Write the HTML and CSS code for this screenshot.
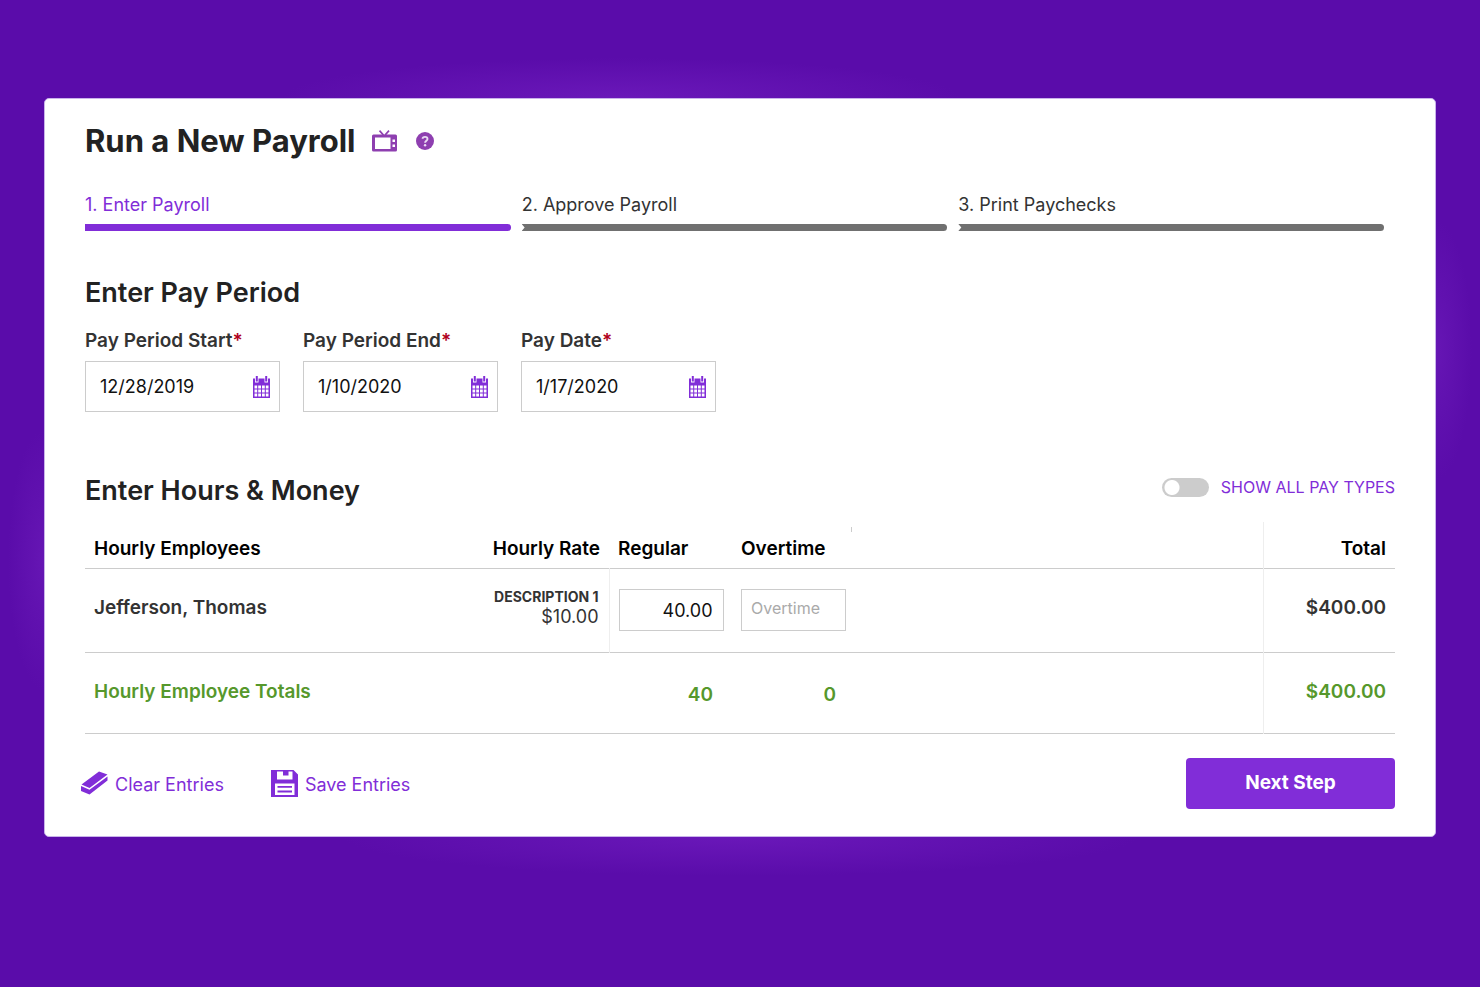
FILE: index.html
```html
<!DOCTYPE html>
<html lang="en">
<head>
  <meta charset="UTF-8" />
  <meta name="viewport" content="width=device-width, initial-scale=1" />
  <title>Run a New Payroll</title>
  <link rel="stylesheet" href="styles.css">
</head>
<body>

  <!-- Shared calendar icon -->
  <svg class="sprite" width="0" height="0" aria-hidden="true">
    <symbol id="icon-calendar" viewBox="0 0 17 22">
      <path fill-rule="evenodd" d="M0 2.500h2v4h3.500v-4h6v4H15v-4h2V22H0zM1.500 9.500v11h14v-11z"/>
      <path d="M2.800 0h2v5.500h-2zM12.200 0h2v5.500h-2z"/>
      <path d="M4.200 9h1v12h-1zM8 9h1v12H8zM11.800 9h1v12h-1zM1 12.500h15v1H1zM1 16.500h15v1H1z"/>
    </symbol>
  </svg>

  <main class="card">

    <header class="page-title">
      <h1>Run a New Payroll</h1>
      <a href="#video" class="title-icon" aria-label="Watch video">
        <svg width="25" height="22" viewBox="0 0 25 22">
          <path d="M7.500 .6l4 4.500M17 .6l-4 4.500" fill="none" stroke="currentColor" stroke-width="1.600"/>
          <path fill="currentColor" fill-rule="evenodd" d="M1.500 4.500h22A1.500 1.500 0 0 1 25 6v14a1.500 1.500 0 0 1-1.500 1.500h-22A1.500 1.500 0 0 1 0 20V6A1.500 1.500 0 0 1 1.500 4.500zM3 7.500v11.500h15.500V7.500zM20.500 9.500v2.500H23V9.500zM20.500 14.500v2.500H23v-2.500z"/>
        </svg>
      </a>
      <a href="#help" class="title-icon" aria-label="Help">
        <svg width="18" height="18" viewBox="0 0 18 18">
          <circle cx="9" cy="9" r="9" fill="currentColor"/>
          <path d="M6.600 6.800C6.700 4.200 11.500 4.200 11.500 6.900 11.500 8.700 9.100 8.700 9.100 10.700" fill="none" stroke="#eadcf2" stroke-width="1.900"/>
          <circle cx="9.100" cy="13.300" r="1.200" fill="#eadcf2"/>
        </svg>
      </a>
    </header>

    <ol class="steps">
      <li class="step active">1. Enter Payroll</li>
      <li class="step">2. Approve Payroll</li>
      <li class="step">3. Print Paychecks</li>
    </ol>

    <form>
      <section class="period">
        <h2>Enter Pay Period</h2>
        <div class="fields">
          <div class="field">
            <label for="start">Pay Period Start<span class="required">*</span></label>
            <div class="date-box">
              <input type="text" id="start" value="12/28/2019">
              <button type="button" aria-label="Choose start date"><svg width="17" height="22"><use href="#icon-calendar"/></svg></button>
            </div>
          </div>
          <div class="field">
            <label for="end">Pay Period End<span class="required">*</span></label>
            <div class="date-box">
              <input type="text" id="end" value="1/10/2020">
              <button type="button" aria-label="Choose end date"><svg width="17" height="22"><use href="#icon-calendar"/></svg></button>
            </div>
          </div>
          <div class="field">
            <label for="paydate">Pay Date<span class="required">*</span></label>
            <div class="date-box">
              <input type="text" id="paydate" value="1/17/2020">
              <button type="button" aria-label="Choose pay date"><svg width="17" height="22"><use href="#icon-calendar"/></svg></button>
            </div>
          </div>
        </div>
      </section>

      <section class="hours">
        <div class="hours-head">
          <h2>Enter Hours &amp; Money</h2>
          <label class="toggle">
            <input type="checkbox">
            <span>SHOW ALL PAY TYPES</span>
          </label>
        </div>

        <table class="payroll">
          <colgroup>
            <col class="col-name">
            <col class="col-rate">
            <col class="col-regular">
            <col class="col-overtime">
            <col>
            <col class="col-total">
          </colgroup>
          <thead>
            <tr>
              <th>Hourly Employees</th>
              <th class="right">Hourly Rate</th>
              <th>Regular</th>
              <th>Overtime</th>
              <th class="spacer"></th>
              <th class="total">Total</th>
            </tr>
          </thead>
          <tbody>
            <tr>
              <td class="name">Jefferson, Thomas</td>
              <td class="rate"><small>DESCRIPTION 1</small>$10.00</td>
              <td><input type="text" value="40.00" aria-label="Regular hours"></td>
              <td><input type="text" placeholder="Overtime" aria-label="Overtime hours"></td>
              <td></td>
              <td class="total">$400.00</td>
            </tr>
          </tbody>
          <tfoot>
            <tr>
              <td colspan="2">Hourly Employee Totals</td>
              <td class="sum">40</td>
              <td class="sum">0</td>
              <td></td>
              <td class="total">$400.00</td>
            </tr>
          </tfoot>
        </table>
      </section>

      <div class="actions">
        <button type="reset" class="link-button">
          <svg width="27" height="24" viewBox="0 0 27 24">
            <path d="M18 .5l8.500 3L8.500 17 .5 13.500zM0 15l8.500 3.800L26.500 5.500V9.500L8.500 23.500 0 20z" fill="currentColor"/>
          </svg>
          <span>Clear Entries</span>
        </button>
        <button type="button" class="link-button">
          <svg width="27" height="27" viewBox="0 0 27 27">
            <path fill="currentColor" fill-rule="evenodd" d="M0 0h22.500L27 4.500V27H0zM6 1.500v8h15.500v-8h-4V5.500h-5.500v-4zM4 13.500V25h19.500V13.500z"/>
            <path d="M6.500 16.800h14.500M6.500 21.500h14.500" stroke="currentColor" stroke-width="1.800"/>
          </svg>
          <span>Save Entries</span>
        </button>
        <button type="submit" class="next">Next Step</button>
      </div>
    </form>

  </main>

</body>
</html>
```
FILE: styles.css
```css
* {
  box-sizing: border-box;
}

body {
  margin: 0;
  min-height: 100vh;
  padding: 98px 44px;
  font-family: Inter, "Liberation Sans", sans-serif;
  font-size: 18px;
  line-height: 24px;
  color: #333;
  background-color: #5a0caa;
  background-image:
    radial-gradient(ellipse 340px 40px at 42% 98px, #6a18b9, transparent),
    radial-gradient(ellipse 400px 40px at 50% 836px, #6a18b9, transparent),
    radial-gradient(ellipse 36px 130px at 44px 560px, #6616b4, transparent),
    radial-gradient(ellipse 36px 130px at calc(100% - 44px) 350px, #6616b4, transparent);
  background-repeat: no-repeat;
}

h1, h2 {
  margin: 0;
  color: #222;
}

h1 {
  font-size: 31px;
  line-height: 40px;
  font-weight: 700;
}

h2 {
  font-size: 27px;
  line-height: 32px;
  font-weight: 600;
}

button, input {
  font: inherit;
}

button {
  border: 0;
  padding: 0;
  background: none;
  color: #812dd8;
  cursor: pointer;
}

svg {
  display: block;
}

.sprite {
  position: absolute;
}

.card {
  padding: 22px 40px 27px;
  background-color: #fff;
  border: 1px solid #c9b3ea;
  border-radius: 5px;
}

.page-title {
  display: flex;
  align-items: center;
}

.title-icon {
  margin-left: 16px;
  color: #8e3fb0;
}

.title-icon + .title-icon {
  margin-left: 19px;
}

/* Steps */
.steps {
  display: grid;
  grid-template-columns: repeat(3, 1fr);
  gap: 11px;
  list-style: none;
  margin: 32px 11px 0 0;
  padding: 0;
}

.step::after {
  content: "";
  display: block;
  height: 7px;
  margin-top: 7px;
  background-color: #707070;
  border-radius: 0 4px 4px 0;
  clip-path: polygon(0 0, 100% 0, 100% 100%, 0 100%, 3px 50%);
}

.step.active {
  color: #812dd8;
}

.step.active::after {
  background-color: #812dd8;
  clip-path: none;
}

/* Pay period */
.period {
  margin-top: 46px;
}

.fields {
  display: flex;
  gap: 23px;
  margin-top: 20px;
}

.field {
  width: 195px;
}

.field label {
  display: block;
  font-size: 19px;
  font-weight: 600;
  white-space: nowrap;
}

.required {
  color: #b00020;
}

.date-box {
  display: flex;
  align-items: center;
  height: 51px;
  margin-top: 8px;
  padding: 0 9px 0 14px;
  border: 1px solid #ccc;
}

.date-box input {
  flex: 1;
  min-width: 0;
  padding: 0;
  border: 0;
  outline: 0;
  color: #111;
}

.date-box svg {
  fill: #812dd8;
}

/* Hours */
.hours {
  margin-top: 63px;
}

.hours-head {
  display: flex;
  justify-content: space-between;
  align-items: flex-start;
}

.toggle {
  display: flex;
  align-items: center;
  gap: 12px;
  font-size: 16px;
  color: #812dd8;
  cursor: pointer;
}

.toggle input {
  appearance: none;
  width: 47px;
  height: 19px;
  margin: 0;
  border-radius: 10px;
  background: radial-gradient(circle at 10px 50%, #fff 7px, #ccc 8px);
}

.toggle input:checked {
  background: radial-gradient(circle at 37px 50%, #fff 7px, #812dd8 8px);
}

.payroll {
  width: 100%;
  margin-top: 15px;
  border-collapse: collapse;
  table-layout: fixed;
  font-size: 19px;
}

.col-name {
  width: 30%;
}

.col-rate {
  width: 10%;
}

.col-regular {
  width: 123px;
}

.col-overtime {
  width: 119px;
}

.col-total {
  width: 132px;
}

.payroll tr {
  border-bottom: 1px solid #ccc;
}

.payroll th,
.payroll td {
  padding: 0 9px;
  text-align: left;
  white-space: nowrap;
}

.payroll th {
  height: 46px;
  padding-top: 8px;
  color: #000;
  font-weight: 600;
}

.payroll .right {
  text-align: right;
}

.payroll .spacer {
  background: linear-gradient(#ccc, #ccc) 0 5px / 1px 5px no-repeat;
}

.payroll .total {
  text-align: right;
  font-weight: 600;
  border-left: 1px solid #eee;
}

.payroll tbody td {
  height: 84px;
}

.payroll .name {
  padding-bottom: 4px;
  font-weight: 600;
}

.payroll tbody .total {
  padding-bottom: 4px;
}

.payroll .rate {
  padding: 0 10px 6px 0;
  font-size: 18px;
  line-height: 20px;
  text-align: right;
  border-right: 1px solid #eee;
}

.rate small {
  display: block;
  font-size: 14px;
  font-weight: 700;
}

.payroll input {
  display: block;
  width: 105px;
  height: 42px;
  padding: 0 10px;
  border: 1px solid #ccc;
  font-size: 18px;
  color: #111;
  text-align: right;
}

.payroll input:placeholder-shown {
  padding: 0 9px 4px;
  font-size: 16px;
  text-align: left;
}

.payroll input::placeholder {
  color: #aaa;
}

.payroll tfoot td {
  height: 81px;
  padding-bottom: 2px;
  color: #56982c;
  font-weight: 600;
}

.payroll tfoot .sum {
  padding: 4px 19px 0 0;
  text-align: right;
}

.payroll tfoot .sum + .sum {
  padding-right: 15px;
}

/* Actions */
.actions {
  display: flex;
  align-items: center;
  gap: 47px;
  margin: 24px 0 0 -4px;
}

.link-button {
  display: flex;
  align-items: center;
  gap: 7px;
  height: 51px;
}

.link-button span {
  padding-top: 3px;
}

.next {
  width: 209px;
  height: 51px;
  margin-left: auto;
  border-radius: 4px;
  background-color: #812dd8;
  color: #fff;
  font-size: 19px;
  font-weight: 700;
}
```
